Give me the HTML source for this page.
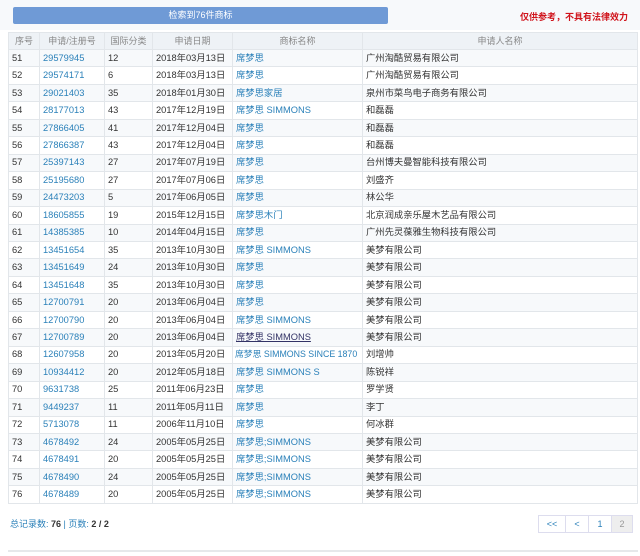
<!DOCTYPE html>
<html><head><meta charset="utf-8"><style>
body{margin:0;width:640px;height:556px;background:#fff;font-family:"Liberation Sans","Noto Sans CJK SC",sans-serif;font-size:9px;color:#333;overflow:hidden;position:relative}
.top{position:absolute;left:0;top:0;width:640px;height:30px;background:#f7f9fb}
.btn{position:absolute;left:13px;top:7px;width:375px;height:17px;background:#6f9ad6;border-radius:2px;color:#fff;text-align:center;line-height:17px;font-size:9px}
.warn{position:absolute;right:12px;top:10px;color:#d0131b;font-weight:bold;font-size:9px}
table{position:absolute;left:8px;top:32px;width:630px;border-collapse:collapse;table-layout:fixed}
tr{height:17.46px}
td,th{border:1px solid #e2e6ea;padding:0 0 0 3px;white-space:nowrap;overflow:hidden;font-weight:normal;text-align:left;line-height:11px;vertical-align:middle;font-size:9.3px}
th{color:#888;text-align:center;background:#eef2f6;padding:0;font-size:9px}
tr:nth-child(even) td{background:#f7f9fb}
.l{color:#2a80b9}
.foot{position:absolute;left:10px;top:517px;color:#2a80b9}
.foot b{color:#333}
.pg{position:absolute;left:539px;top:515px;display:flex}
.pg span{border:1px solid #dde;height:16px;line-height:16px;text-align:center;color:#2a80b9;margin-left:-1px}
.line{position:absolute;left:8px;top:550px;width:630px;height:2px;background:#e6e8ea}
</style></head><body>
<div class="top"></div>
<div class="btn">检索到76件商标</div>
<div class="warn">仅供参考，不具有法律效力</div>
<table>
<colgroup><col style="width:31px"><col style="width:65px"><col style="width:48px"><col style="width:80px"><col style="width:130px"><col></colgroup>
<tr style="height:17px"><th>序号</th><th>申请/注册号</th><th>国际分类</th><th>申请日期</th><th>商标名称</th><th>申请人名称</th></tr>
<tr><td>51</td><td class="l">29579945</td><td>12</td><td>2018年03月13日</td><td class="l">席梦思</td><td>广州淘酷贸易有限公司</td></tr>
<tr><td>52</td><td class="l">29574171</td><td>6</td><td>2018年03月13日</td><td class="l">席梦思</td><td>广州淘酷贸易有限公司</td></tr>
<tr><td>53</td><td class="l">29021403</td><td>35</td><td>2018年01月30日</td><td class="l">席梦思家居</td><td>泉州市菜鸟电子商务有限公司</td></tr>
<tr><td>54</td><td class="l">28177013</td><td>43</td><td>2017年12月19日</td><td class="l">席梦思 SIMMONS</td><td>和磊磊</td></tr>
<tr><td>55</td><td class="l">27866405</td><td>41</td><td>2017年12月04日</td><td class="l">席梦思</td><td>和磊磊</td></tr>
<tr><td>56</td><td class="l">27866387</td><td>43</td><td>2017年12月04日</td><td class="l">席梦思</td><td>和磊磊</td></tr>
<tr><td>57</td><td class="l">25397143</td><td>27</td><td>2017年07月19日</td><td class="l">席梦思</td><td>台州博夫曼智能科技有限公司</td></tr>
<tr><td>58</td><td class="l">25195680</td><td>27</td><td>2017年07月06日</td><td class="l">席梦思</td><td>刘盛齐</td></tr>
<tr><td>59</td><td class="l">24473203</td><td>5</td><td>2017年06月05日</td><td class="l">席梦思</td><td>林公华</td></tr>
<tr><td>60</td><td class="l">18605855</td><td>19</td><td>2015年12月15日</td><td class="l">席梦思木门</td><td>北京润成亲乐屋木艺品有限公司</td></tr>
<tr><td>61</td><td class="l">14385385</td><td>10</td><td>2014年04月15日</td><td class="l">席梦思</td><td>广州先灵葆雅生物科技有限公司</td></tr>
<tr><td>62</td><td class="l">13451654</td><td>35</td><td>2013年10月30日</td><td class="l">席梦思 SIMMONS</td><td>美梦有限公司</td></tr>
<tr><td>63</td><td class="l">13451649</td><td>24</td><td>2013年10月30日</td><td class="l">席梦思</td><td>美梦有限公司</td></tr>
<tr><td>64</td><td class="l">13451648</td><td>35</td><td>2013年10月30日</td><td class="l">席梦思</td><td>美梦有限公司</td></tr>
<tr><td>65</td><td class="l">12700791</td><td>20</td><td>2013年06月04日</td><td class="l">席梦思</td><td>美梦有限公司</td></tr>
<tr><td>66</td><td class="l">12700790</td><td>20</td><td>2013年06月04日</td><td class="l">席梦思 SIMMONS</td><td>美梦有限公司</td></tr>
<tr><td>67</td><td class="l">12700789</td><td>20</td><td>2013年06月04日</td><td class="l" style="text-decoration:underline;color:#336">席梦思 SIMMONS</td><td>美梦有限公司</td></tr>
<tr><td>68</td><td class="l">12607958</td><td>20</td><td>2013年05月20日</td><td class="l" style="font-size:8.8px;padding-left:2px">席梦思 SIMMONS SINCE 1870</td><td>刘增帅</td></tr>
<tr><td>69</td><td class="l">10934412</td><td>20</td><td>2012年05月18日</td><td class="l">席梦思 SIMMONS S</td><td>陈锐祥</td></tr>
<tr><td>70</td><td class="l">9631738</td><td>25</td><td>2011年06月23日</td><td class="l">席梦思</td><td>罗学贤</td></tr>
<tr><td>71</td><td class="l">9449237</td><td>11</td><td>2011年05月11日</td><td class="l">席梦思</td><td>李丁</td></tr>
<tr><td>72</td><td class="l">5713078</td><td>11</td><td>2006年11月10日</td><td class="l">席梦思</td><td>何冰群</td></tr>
<tr><td>73</td><td class="l">4678492</td><td>24</td><td>2005年05月25日</td><td class="l">席梦思;SIMMONS</td><td>美梦有限公司</td></tr>
<tr><td>74</td><td class="l">4678491</td><td>20</td><td>2005年05月25日</td><td class="l">席梦思;SIMMONS</td><td>美梦有限公司</td></tr>
<tr><td>75</td><td class="l">4678490</td><td>24</td><td>2005年05月25日</td><td class="l">席梦思;SIMMONS</td><td>美梦有限公司</td></tr>
<tr><td>76</td><td class="l">4678489</td><td>20</td><td>2005年05月25日</td><td class="l">席梦思;SIMMONS</td><td>美梦有限公司</td></tr>
</table>
<div class="foot">总记录数: <b>76</b> | 页数: <b>2 / 2</b></div>
<div class="pg"><span style="width:26px">&lt;&lt;</span><span style="width:22px">&lt;</span><span style="width:22px">1</span><span style="width:20px;background:#eee;color:#999">2</span></div>
<div class="line"></div>
</body></html>
